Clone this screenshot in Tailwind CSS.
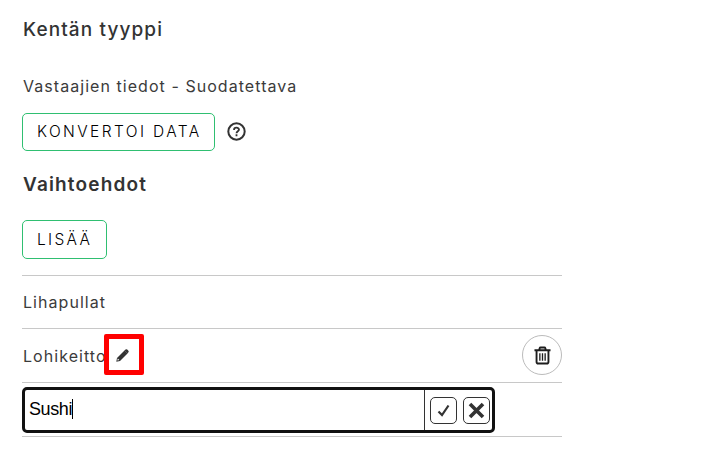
<!DOCTYPE html>
<html lang="fi">
<head>
<meta charset="utf-8">
<title>Kentän tyyppi</title>
<script src="https://cdn.jsdelivr.net/npm/@tailwindcss/browser@4"></script>
</head>
<body class="h-[467px] overflow-hidden bg-white font-['Inter',sans-serif] text-[#3b3b3b]">
<main class="ml-[22px] w-[540px] pt-[17px]">
  <h2 class="pl-px text-[19px] leading-[26px] font-medium tracking-[1.1px] text-[#333]">Kentän tyyppi</h2>
  <p class="mt-[31px] pl-px text-[16px] leading-[24px] tracking-[1.05px]">Vastaajien tiedot - Suodatettava</p>
  <div class="mt-[15px] flex items-center gap-[12px]">
    <button class="h-[38px] w-[193px] rounded-[5px] border border-[#2fbf71] pl-[14px] text-left text-[15.5px] leading-[36px] font-light tracking-[2.4px] whitespace-nowrap text-black">KONVERTOI DATA</button>
    <svg class="mt-[-2px] size-[19px]" viewBox="0 0 19 19" fill="none" stroke="#333" stroke-width="2"><circle cx="9.5" cy="9.5" r="8.2"/><path d="M7 7.9C7 5 12 5 12 7.6C12 9.3 9.5 9.1 9.5 11.2M9.5 12.3V14.2" stroke-width="1.8"/></svg>
  </div>
  <h2 class="mt-[21px] pl-px text-[19px] leading-[26px] font-semibold tracking-[1.15px] text-[#333]">Vaihtoehdot</h2>
  <button class="mt-[22px] block h-[39px] w-[85px] rounded-[5px] border border-[#2fbf71] pl-[14px] text-left text-[15.5px] leading-[37px] font-light tracking-[2.3px] text-black">LISÄÄ</button>
  <ul class="mt-[16px] border-t border-[#c8c8c8] text-[16px] tracking-[1.05px]">
    <li class="flex h-[53px] items-center border-b border-[#c8c8c8] pl-px">Lihapullat</li>
    <li class="flex h-[54px] items-center justify-between border-b border-[#c8c8c8] pl-px">
      <div class="flex items-center">
        <span class="w-[81px] overflow-hidden whitespace-nowrap">Lohikeitto</span>
        <span class="mt-[-3px] flex h-[41px] w-[40px] items-center justify-center rounded-[2px] border-[5px] border-[#ff0000] bg-white">
          <svg class="mt-[3px] mr-[3px] size-[13px]" viewBox="0 0 13 13" fill="#333"><path d="M.3 12.7L1 9L8.5 1.5L11.5 4.5L4 12Z"/><path d="M8.4 1.6L9.9.3Q10.5 0 11.2.6L12.4 1.8Q13 2.5 12.6 3.1L11.4 4.6Z"/><path d="M1.8 9.6L3.3 11.1L1.6 11.5L1.4 11.3Z" fill="#fff"/></svg>
        </span>
      </div>
      <button class="mt-[-1px] flex size-[40px] items-center justify-center rounded-full border border-[#bbb]">
        <svg class="h-[19px] w-[17px]" viewBox="0 0 18 19" fill="none" stroke="#1d1d1d" stroke-width="2"><path d="M.5 4H17.5M5.5 4L6 1.8Q6.2 1 7 1H11Q11.8 1 12 1.8L12.5 4M2.7 4V16Q2.7 18 4.5 18H13.5Q15.3 18 15.3 16V4"/><path d="M6.2 7V15M9 7V15M11.8 7V15" stroke-width="1.4"/></svg>
      </button>
    </li>
    <li class="h-[54px] border-b border-[#c8c8c8] pt-[4px]">
      <div class="flex h-[46px] w-[473px] rounded-[5px] border-[3px] border-[#111]">
        <div class="flex w-[400px] items-center border-r border-[#333] pb-[2px] pl-[4px] font-['Liberation_Sans',sans-serif] text-[18px] tracking-[-0.4px] text-black"><span>Sushi</span><span class="h-[20px] w-px bg-black"></span></div>
        <div class="flex flex-1 items-center gap-[6px] pl-[5px]">
          <button class="flex size-[27px] items-center justify-center rounded-[5px] border border-[#333]"><svg class="size-[13px]" viewBox="0 0 13 13" fill="none" stroke="#333" stroke-width="2.2"><path d="M1.5 7.5L5 11L11.5 1.5"/></svg></button>
          <button class="flex size-[27px] items-center justify-center rounded-[5px] border border-[#333]"><svg class="size-[17px]" viewBox="0 0 17 17" fill="none" stroke="#333" stroke-width="3.6"><path d="M2 2L15 15M15 2L2 15"/></svg></button>
        </div>
      </div>
    </li>
  </ul>
</main>
</body>
</html>
